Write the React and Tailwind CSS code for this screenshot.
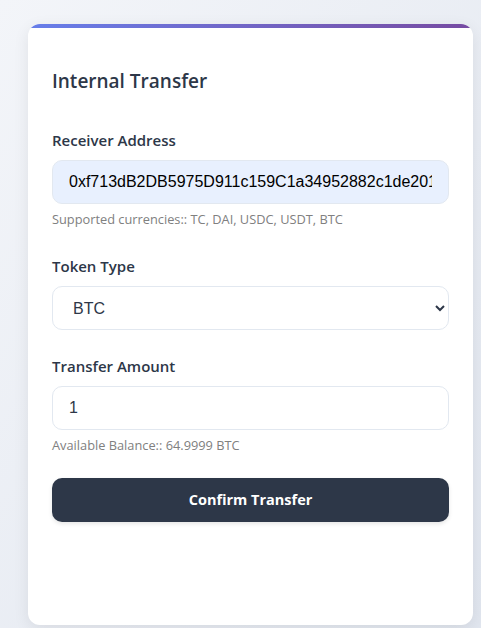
import React, { useState } from 'react';

const font = { fontFamily: '"Open Sans", "Noto Sans", sans-serif' };
const arial = { fontFamily: '"Liberation Sans", Arial, sans-serif' };

export default function App() {
    const [address, setAddress] = useState('0xf713dB2DB5975D911c159C1a34952882c1de2019');
    const [token, setToken] = useState('BTC');
    const [amount, setAmount] = useState('1');

    return (
        <div className="min-h-[628px] w-[481px] bg-gradient-to-br from-[#f3f5f9] to-[#e1e6ef] pt-[24px] pl-[28px] pr-[8px]" style={font}>
            {/* card */}
            <div className="h-[601px] bg-white rounded-[12px] overflow-hidden shadow-[0_4px_16px_rgba(0,0,0,0.08)]">
                <div className="h-[4px] bg-gradient-to-r from-[#667eea] to-[#764ba2]" />
                <div className="px-[24px] pt-[39px]">
                    <h2 className="text-[19px] leading-[28px] font-semibold text-[#2d3748] mb-[35px]">Internal Transfer</h2>

                    <label className="block text-[15px] leading-[20px] font-semibold text-[#2d3748] mb-[10px]">Receiver Address</label>
                    <input
                        value={address}
                        onChange={(e) => setAddress(e.target.value)}
                        className="block w-full h-[44px] px-[16px] rounded-[10px] border border-[#e2e8f0] bg-[#e8f0fe] text-[16px] text-black outline-none"
                        style={arial}
                    />
                    <p className="mt-[6px] text-[12.8px] leading-[18px] text-[#808080]">Supported currencies:: TC, DAI, USDC, USDT, BTC</p>

                    <label className="block mt-[28px] text-[15px] leading-[20px] font-semibold text-[#2d3748] mb-[10px]">Token Type</label>
                    <select
                        value={token}
                        onChange={(e) => setToken(e.target.value)}
                        className="block w-full h-[44px] px-[16px] rounded-[10px] border border-[#e2e8f0] bg-white text-[16px] text-[#2d3748] outline-none"
                        style={arial}
                    >
                        <option>TC</option>
                        <option>DAI</option>
                        <option>USDC</option>
                        <option>USDT</option>
                        <option>BTC</option>
                    </select>

                    <label className="block mt-[26px] text-[15px] leading-[20px] font-semibold text-[#2d3748] mb-[10px]">Transfer Amount</label>
                    <input
                        value={amount}
                        onChange={(e) => setAmount(e.target.value)}
                        className="block w-full h-[44px] px-[16px] rounded-[10px] border border-[#e2e8f0] bg-white text-[16px] text-[#2d3748] outline-none"
                        style={arial}
                    />
                    <p className="mt-[6px] text-[12.8px] leading-[18px] text-[#808080]">Available Balance:: 64.9999 BTC</p>

                    <button className="mt-[24px] w-full h-[44px] rounded-[10px] bg-[#2d3748] text-white text-[14.5px] font-bold shadow-[0_2px_4px_rgba(0,0,0,0.1)]">
                        Confirm Transfer
                    </button>
                </div>
            </div>
        </div>
    );
}
